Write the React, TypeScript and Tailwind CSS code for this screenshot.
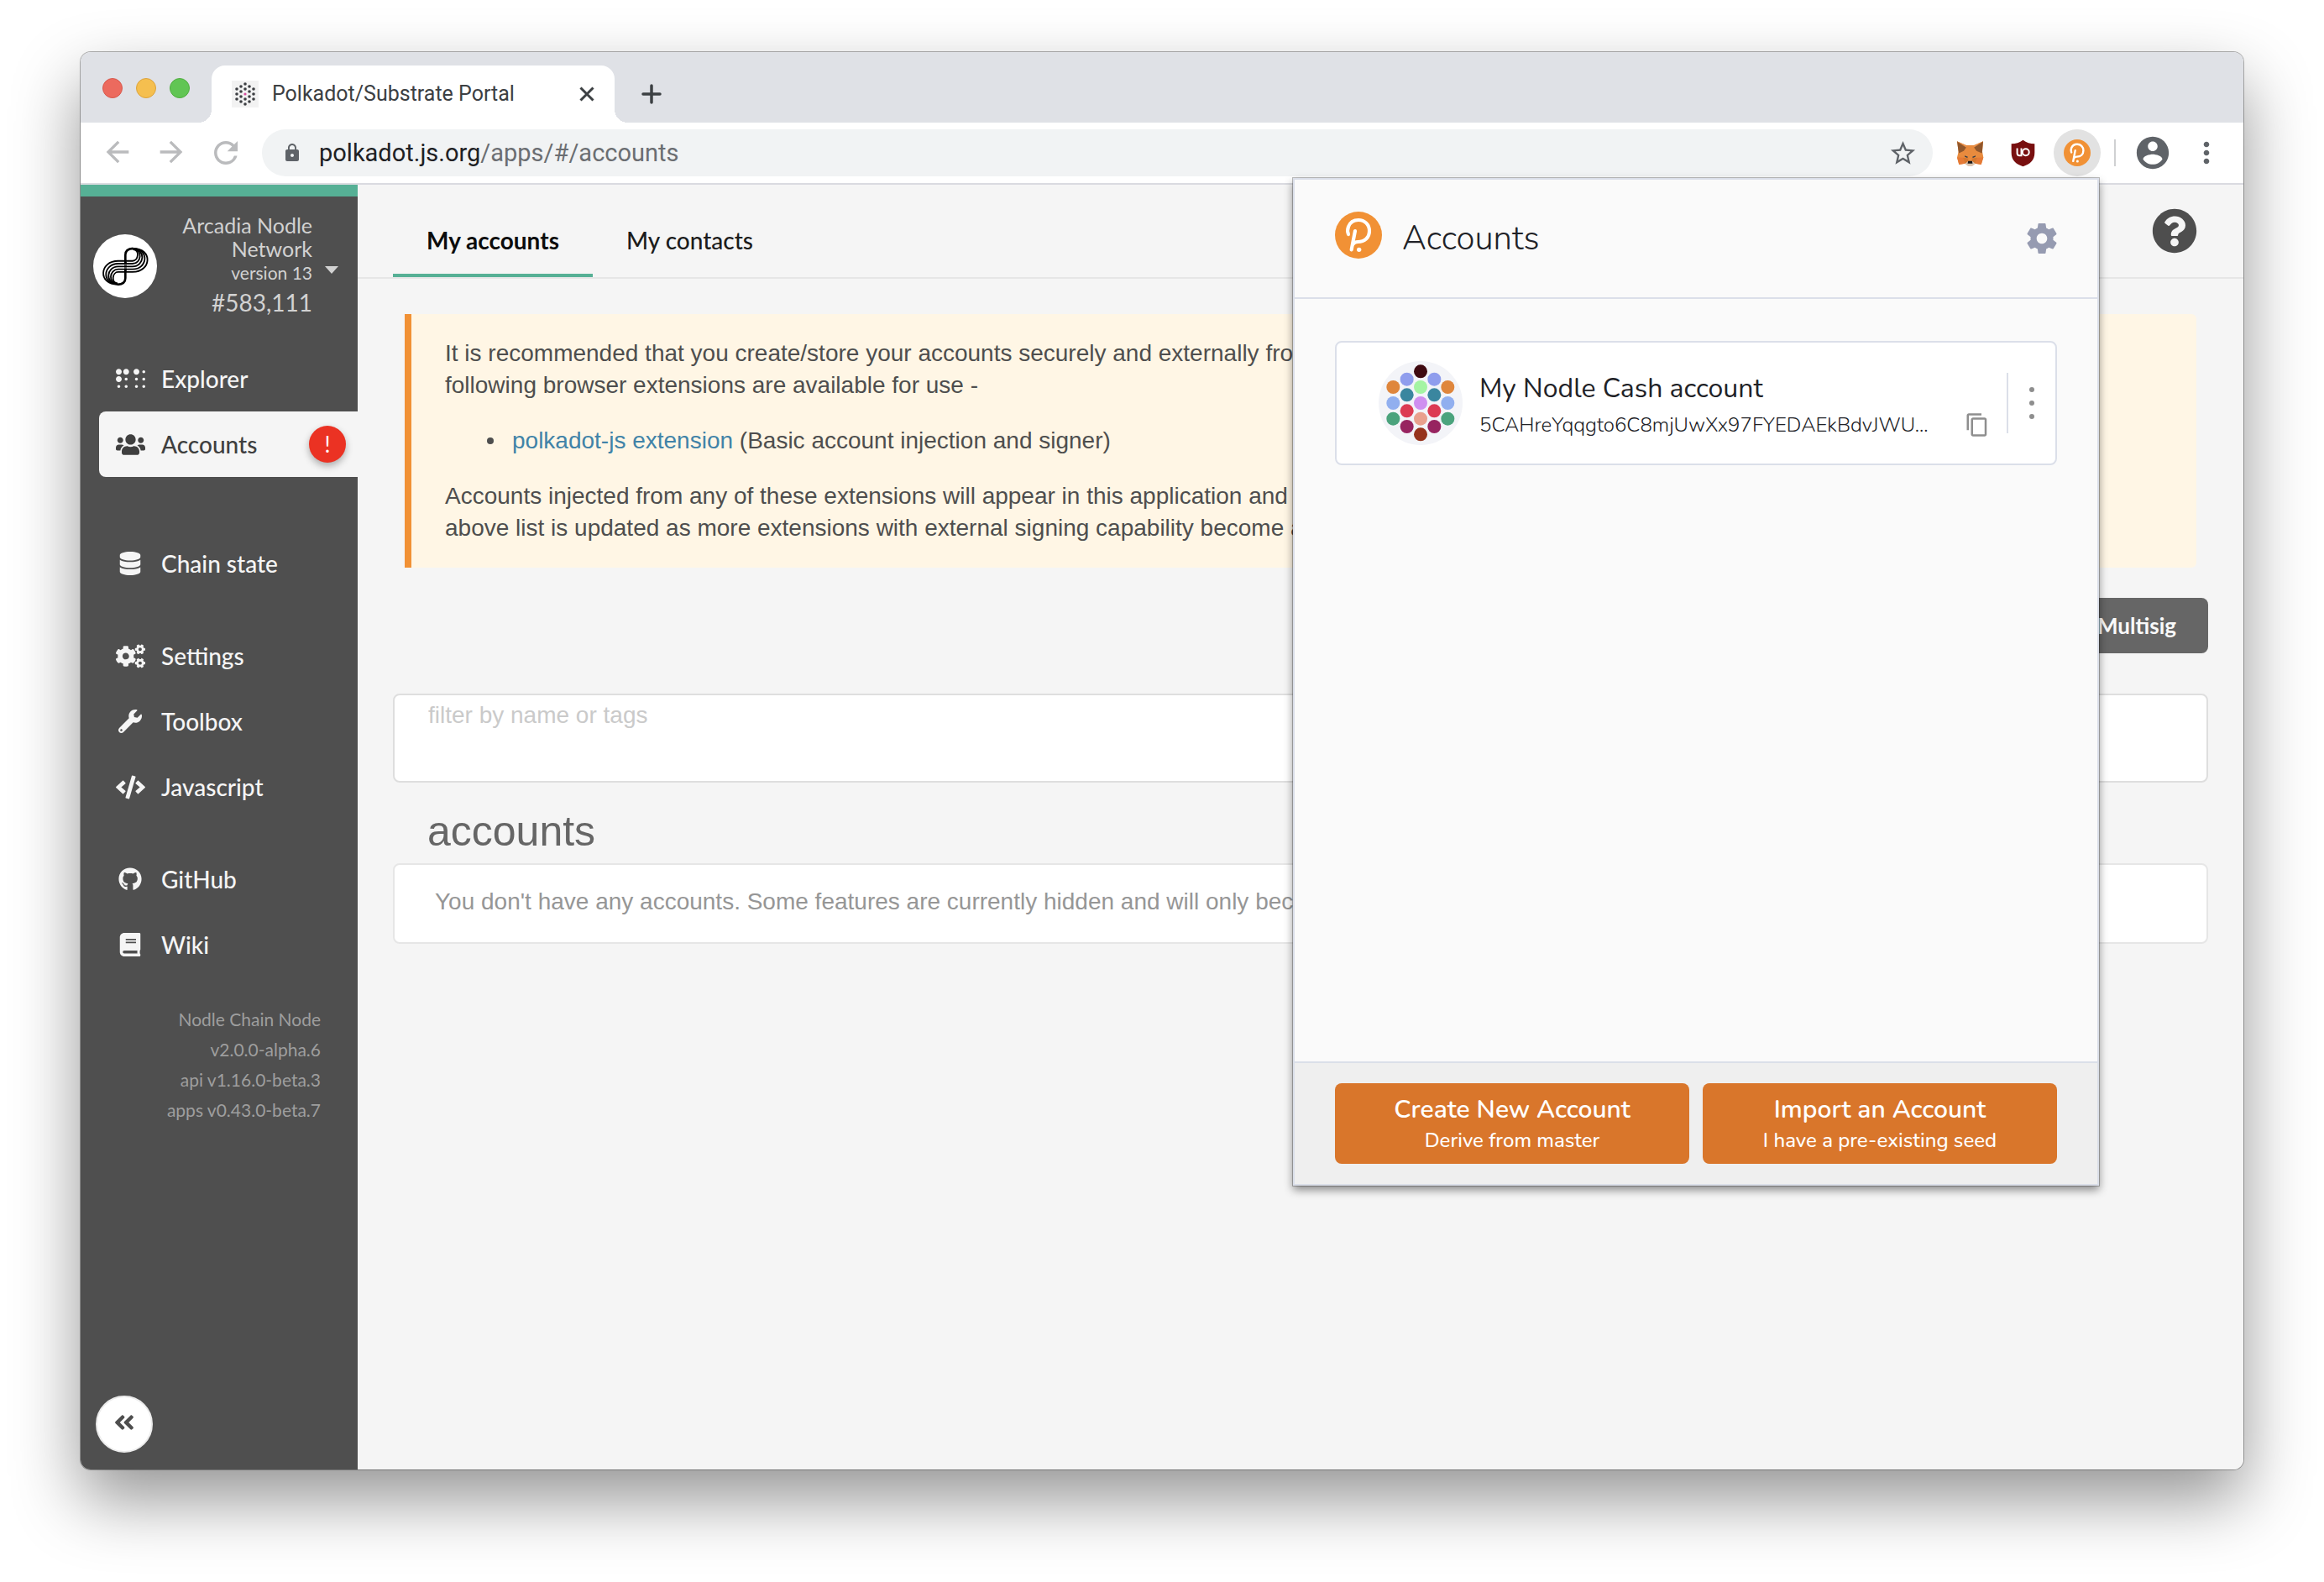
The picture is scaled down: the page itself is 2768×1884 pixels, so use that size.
import type { ReactNode } from "react";
import {
  FaAngleDoubleLeft,
  FaBook,
  FaBraille,
  FaCode,
  FaCogs,
  FaDatabase,
  FaGithub,
  FaQuestionCircle,
  FaUsers,
  FaWrench,
} from "react-icons/fa";
import {
  MdArrowBack,
  MdArrowForward,
  MdContentCopy,
  MdLock,
  MdMoreVert,
  MdRefresh,
  MdStarBorder,
} from "react-icons/md";

const lato = "font-['Lato',sans-serif]";
const helvetica = "font-['Liberation_Sans',Arial,sans-serif]";
const nunito = "font-['Nunito','Open_Sans',sans-serif]";

function PolkadotLogo({ className }: { className: string }) {
  return (
    <svg viewBox="90 66 168 168" className={className} aria-hidden="true">
      <circle cx="174" cy="150" r="84" fill="#f19135" />
      <g fill="none" stroke="#fff" strokeWidth="12.5" strokeLinecap="round" strokeLinejoin="round">
        <path d="M138 147C134 138 135 128 138 120C144 104 157 96 174 96C196 96 213 112 213 135C213 159 196 174 172 174C164 174 158 177 155 182" />
        <path d="M162 135L149 202" />
      </g>
      <circle cx="176" cy="202" r="8" fill="#fff" />
    </svg>
  );
}

function SubstrateFavicon() {
  const columns: [number, number[]][] = [
    [0, [-12, -6, 6, 12]],
    [5, [-9, -3, 3, 9]],
    [-5, [-9, -3, 3, 9]],
    [10, [-6, 0, 6]],
    [-10, [-6, 0, 6]],
  ];
  return (
    <svg viewBox="-16 -16 32 32" className="size-8 shrink-0" aria-hidden="true">
      <rect x="-16" y="-16" width="32" height="32" fill="#f2f2f2" />
      {columns.map(([x, ys]) =>
        ys.map((y) => <circle key={`${x} ${y}`} cx={x} cy={y} r="1.8" fill="#3c3e42" />),
      )}
      <circle r="1.6" fill="#d64a9c" />
    </svg>
  );
}

function FoxIcon() {
  return (
    <svg viewBox="388 108 100 94" className="h-[31px] w-[33px]" aria-hidden="true">
      <path
        d="M391 112L424 126H452L485 112L482 150L486 170L478 196L456 192L446 200H430L420 192L398 196L391 170L396 150Z"
        fill="#e88b3e"
      />
      <path d="M391 112L424 134L415 147L397 155Z M485 112L452 134L461 147L481 155Z" fill="#91572c" />
      <path d="M390 112L424 126V134Z M486 112L452 126V134Z" fill="#e8904a" />
      <path d="M391 170L412 171L420 192L398 196Z M486 170L464 171L456 192L478 196Z" fill="#e57a36" />
      <path d="M412 171L432 173L430 186L420 192Z M464 171L444 173L446 186L456 192Z" fill="#d5772f" />
      <path d="M418 163L430 168L428 172L419 168Z M458 163L446 168L448 172L457 168Z" fill="#2d3a48" />
      <path d="M420 192L431 184H446L456 192L446 201H430Z" fill="#d8c3b0" />
      <path d="M431 183H445L447 192H429Z" fill="#161616" />
    </svg>
  );
}

function ShieldIcon() {
  return (
    <svg viewBox="586 106 88 100" className="h-[33px] w-[29px]" aria-hidden="true">
      <path
        d="M630 108C618 118 604 122 588 122V154C588 182 604 195 630 204C656 195 672 182 672 154V122C656 122 642 118 630 108Z"
        fill="#780f0f"
      />
      <path d="M609 138V156Q609 164 617 164H624V138" fill="none" stroke="#fff" strokeWidth="6" />
      <circle cx="640" cy="152" r="12" fill="none" stroke="#fff" strokeWidth="6" />
    </svg>
  );
}

function NodleLogo() {
  const strands = [
    [190, 279],
    [180, 266],
    [170, 254],
    [160, 243],
    [150, 232],
  ];
  const half = (
    <g>
      {strands.map(([y, x], i) => (
        <path key={y} d={`M178 ${y}H205C${x - 6} ${y} ${x} ${105 + i} 207 ${105 + i}`} />
      ))}
      <path d="M179 186V128C179 113 189 106 207 105" strokeWidth="8" />
    </g>
  );
  return (
    <svg viewBox="63 54 230 230" className="size-[76px] shrink-0" aria-hidden="true">
      <circle cx="178" cy="169" r="115" fill="#fff" />
      <g fill="none" stroke="#000" strokeWidth="5.5">
        {half}
        <g transform="rotate(180 179 170)">{half}</g>
      </g>
      <path d="M173 165H185M173 175H185" stroke="#fff" strokeWidth="2" />
    </svg>
  );
}

function Identicon() {
  const dots: [number, number, string][] = [
    [396, 637, "#3f0a10"],
    [347, 665, "#8f9ded"],
    [445, 665, "#8f9ded"],
    [298, 693, "#df863c"],
    [396, 693, "#a4f4a3"],
    [493, 693, "#df863c"],
    [347, 721, "#3a869f"],
    [445, 721, "#3a869f"],
    [298, 750, "#91afef"],
    [396, 750, "#cf8ff0"],
    [493, 750, "#91afef"],
    [347, 778, "#dc3a52"],
    [445, 778, "#dc3a52"],
    [298, 806, "#4ba37d"],
    [396, 806, "#e9a08d"],
    [493, 806, "#4ba37d"],
    [347, 834, "#972460"],
    [445, 834, "#972460"],
    [396, 862, "#96331d"],
  ];
  return (
    <svg viewBox="246 600 300 300" className="size-[100px] shrink-0" aria-hidden="true">
      <circle cx="396" cy="750" r="150" fill="#f3f4f8" />
      {dots.map(([x, y, fill]) => (
        <circle key={`${x} ${y}`} cx={x} cy={y} r="24" fill={fill} />
      ))}
    </svg>
  );
}

function BrowserTabs() {
  return (
    <div className="flex h-[84px] items-end bg-[#dfe1e6] pl-[26px]">
      <div className="flex items-center gap-4 self-center pt-0.5 pr-[10px]">
        <button aria-label="Close window" className="size-6 rounded-full border border-[#d8584c] bg-[#ec6a5e]" />
        <button aria-label="Minimise window" className="size-6 rounded-full border border-[#dca33b] bg-[#f5bf4f]" />
        <button aria-label="Zoom window" className="size-6 rounded-full border border-[#4fae3e] bg-[#61c554]" />
      </div>
      <div className="size-4 bg-[radial-gradient(circle_at_0_0,transparent_16px,white_16px)]" />
      <div className="flex h-[68px] w-[480px] items-center rounded-t-2xl bg-white pr-6 pl-6">
        <SubstrateFavicon />
        <span className="ml-4 flex-1 text-[25px] leading-8 text-[#3c4043]">Polkadot/Substrate Portal</span>
        <button aria-label="Close tab" className="flex">
          <svg viewBox="0 0 18 18" className="size-[18px]" stroke="#3c4043" strokeWidth="3">
            <path d="M1.500 1.500L16.500 16.500M16.500 1.500L1.500 16.500" />
          </svg>
        </button>
      </div>
      <div className="size-4 bg-[radial-gradient(circle_at_100%_0,transparent_16px,white_16px)]" />
      <button aria-label="New tab" className="mb-[22px] ml-4 flex">
        <svg viewBox="0 0 24 24" className="size-6" stroke="#3c4043" strokeWidth="3.500" strokeLinecap="round">
          <path d="M12 2V22M2 12H22" />
        </svg>
      </button>
    </div>
  );
}

function Toolbar() {
  return (
    <div className="flex h-[74px] items-center border-b-2 border-[#dadbe0] bg-white pr-6 pl-6">
      <div className="flex shrink-0 gap-6 text-[#babbbd]">
        <button aria-label="Back" className="flex">
          <MdArrowBack size={40} />
        </button>
        <button aria-label="Forward" className="flex">
          <MdArrowForward size={40} />
        </button>
        <button aria-label="Reload" className="flex">
          <MdRefresh size={42} />
        </button>
      </div>
      <div className="ml-[22px] flex h-14 flex-1 items-center rounded-full bg-[#f1f3f4] pr-[18px] pl-6">
        <MdLock size={24} className="text-[#5f6368]" />
        <a href="#accounts" className="ml-5 flex-1 text-[29px] leading-9 text-[#6b6e72]">
          <span className="text-[#202124]">polkadot.js.org</span>/apps/#/accounts
        </a>
        <button aria-label="Bookmark this page" className="flex text-[#5f6368]">
          <MdStarBorder size={35} />
        </button>
      </div>
      <div className="flex shrink-0 items-center">
        <button aria-label="MetaMask" className="ml-7 flex">
          <FoxIcon />
        </button>
        <button aria-label="uBlock Origin" className="ml-8 flex">
          <ShieldIcon />
        </button>
        <button aria-label="polkadot-js" className="ml-[22px] flex size-14 items-center justify-center rounded-full bg-[#e2e2e2]">
          <PolkadotLogo className="size-8" />
        </button>
        <span className="ml-4 h-8 w-0.5 bg-[#cfd0d2]" />
        <button aria-label="Profile" className="ml-[21px] flex text-[#5f6368]">
          <svg viewBox="0 0 24 24" className="size-[46px]" fill="currentColor">
            <path d="M12 2C6.480 2 2 6.480 2 12s4.480 10 10 10 10-4.480 10-10S17.520 2 12 2zm0 3c1.660 0 3 1.340 3 3s-1.340 3-3 3-3-1.340-3-3 1.340-3 3-3zm0 14.200c-2.500 0-4.710-1.280-6-3.220.03-1.990 4-3.080 6-3.080 1.990 0 5.970 1.090 6 3.080-1.290 1.940-3.500 3.220-6 3.220z" />
          </svg>
        </button>
        <button aria-label="Menu" className="ml-[21px] flex text-[#5f6368]">
          <MdMoreVert size={40} />
        </button>
      </div>
    </div>
  );
}

function NavItem({ icon, label, active }: { icon: ReactNode; label: string; active?: boolean }) {
  return (
    <a
      href={`#${label.toLowerCase().replace(" ", "-")}`}
      className={
        active
          ? "flex h-[78px] items-center rounded-l-lg bg-[#f5f5f5] pr-[14px] pl-5 text-[#3f3f3f]"
          : "flex h-[78px] items-center pr-[14px] pl-5 text-[#f5f5f5]"
      }
    >
      <span className="flex w-[34px] shrink-0 justify-center [&>svg]:shrink-0">{icon}</span>
      <span className="ml-5 flex-1 text-[28px] font-medium">{label}</span>
      {active && (
        <span className="flex size-11 items-center justify-center rounded-full bg-[#eb3223] text-[26px] leading-none text-white shadow-[0_4px_8px_rgba(0,0,0,0.3)]">
          !
        </span>
      )}
    </a>
  );
}

function Sidebar() {
  return (
    <aside className={`flex w-[330px] shrink-0 flex-col border-t-14 border-[#56b095] bg-[#4f4f4f] ${lato}`}>
      <button className="flex items-center pt-5 pr-[23px] pl-[15px] text-right text-[#d2d2d2]">
        <NodleLogo />
        <span className="flex flex-1 flex-col">
          <span className="text-[25px] leading-7">
            Arcadia Nodle
            <br />
            Network
          </span>
          <span className="text-[21px] leading-[30px]">version 13</span>
          <span className="text-[28px] leading-10">#583,111</span>
        </span>
        <svg viewBox="0 0 16 9" className="mt-2 ml-[15px] h-[9px] w-4" fill="currentColor" aria-hidden="true">
          <path d="M0 0H16L8 9Z" />
        </svg>
      </button>
      <nav className="mt-8 flex flex-col gap-8 pl-[22px]">
        <div className="mb-8">
          <NavItem icon={<FaBraille size={35} />} label="Explorer" />
          <NavItem icon={<FaUsers size={35} />} label="Accounts" active />
        </div>
        <NavItem icon={<FaDatabase size={28} />} label="Chain state" />
        <div>
          <NavItem icon={<FaCogs size={35} />} label="Settings" />
          <NavItem icon={<FaWrench size={28} />} label="Toolbox" />
          <NavItem icon={<FaCode size={35} />} label="Javascript" />
        </div>
        <div>
          <NavItem icon={<FaGithub size={28} />} label="GitHub" />
          <NavItem icon={<FaBook size={28} />} label="Wiki" />
        </div>
      </nav>
      <div className="mt-8 pr-11 text-right text-[21px] leading-9 text-[#9e9e9e]">
        <p>Nodle Chain Node</p>
        <p>v2.0.0-alpha.6</p>
        <p>api v1.16.0-beta.3</p>
        <p>apps v0.43.0-beta.7</p>
      </div>
      <button
        aria-label="Collapse sidebar"
        className="mt-auto mb-5 ml-[18px] flex size-[68px] items-center justify-center rounded-full border-2 border-[#ebebeb] bg-white pb-1 text-[28px] text-[#4e4e4e]"
      >
        <FaAngleDoubleLeft />
      </button>
    </aside>
  );
}

function AccountsPage() {
  return (
    <main className={`min-w-0 flex-1 bg-[#f5f5f5] text-[28px] ${helvetica}`}>
      <div className={`flex h-28 items-center border-b-2 border-[#e6e6e6] pr-[55px] pl-[42px] ${lato}`}>
        <button className="h-[84px] self-end border-b-4 border-[#56b095] px-10 font-bold text-[#0c0c0c]">
          My accounts
        </button>
        <button className="h-[84px] self-end border-b-4 border-transparent px-10 font-medium text-[#1c1c1c]">
          My contacts
        </button>
        <button aria-label="Help" className="ml-auto flex text-[54px] text-[#4e4e4e]">
          <FaQuestionCircle />
        </button>
      </div>
      <div className="flex flex-col px-[42px]">
        <article className="mx-[14px] mt-[42px] rounded-r-md border-l-8 border-[#f19135] bg-[#fff6e5] px-10 py-7 leading-[38px] text-[#4e4e4e]">
          <p>
            It is recommended that you create/store your accounts securely and externally from the app. On Chrome the
            <br />
            following browser extensions are available for use -
          </p>
          <ul className="my-7 pl-[50px]">
            <li className="flex items-center before:mr-[22px] before:size-2 before:rounded-full before:bg-[#4e4e4e] before:content-['']">
              <span>
                <a href="#extension" className="text-[#4183a8]">
                  polkadot-js extension
                </a>{" "}
                (Basic account injection and signer)
              </span>
            </li>
          </ul>
          <p>
            Accounts injected from any of these extensions will appear in this application and be available for use. The
            <br />
            above list is updated as more extensions with external signing capability become available.
          </p>
        </article>
        <button
          className={`mt-9 h-[66px] self-end rounded-lg bg-[#666] pr-[38px] pl-16 text-[26px] font-bold text-[#f9f9f9] ${lato}`}
        >
          Multisig
        </button>
        <div className="mt-12 h-[106px] rounded-lg border-2 border-[#dedede] bg-white px-10 pt-2">
          <input
            type="text"
            aria-label="filter by name or tags"
            placeholder="filter by name or tags"
            className="block h-8 w-full bg-transparent outline-none placeholder:text-[#cacaca]"
          />
        </div>
        <h1 className="mt-7 mb-2 pl-[41px] text-[50px] leading-[60px] text-[#666]">accounts</h1>
        <div className="rounded-lg border-2 border-[#e6e6e6] bg-white">
          <table className="w-full" aria-label="accounts">
            <tbody>
              <tr>
                <td className="h-[92px] px-12 pb-1 text-[#969696]">
                  You don't have any accounts. Some features are currently hidden and will only become available once
                  you have accounts.
                </td>
              </tr>
            </tbody>
          </table>
        </div>
      </div>
    </main>
  );
}

function ExtensionPopup() {
  return (
    <section
      aria-label="Extension"
      className={`absolute top-[150px] right-[172px] flex min-h-[1200px] w-[960px] flex-col border-2 border-[#dbdfe9] bg-[#fafafa] text-[#212227] shadow-[0_0_0_1px_rgba(0,0,0,0.25),0_5px_10px_rgba(0,0,0,0.45)] ${nunito}`}
    >
      <header className="flex h-[142px] items-center border-b-2 border-[#dbdfe9] px-12">
        <PolkadotLogo className="mb-2 size-14" />
        <h2 className="ml-6 flex-1 text-[40px] leading-[56px] font-light">Accounts</h2>
        <button aria-label="Settings" className="flex text-[#969bb1]">
          <svg viewBox="2 2 20 20" className="size-9" fill="currentColor">
            <path d="M19.430 12.980c.04-.32.07-.64.07-.98s-.03-.66-.07-.98l2.110-1.650c.19-.15.24-.42.12-.64l-2-3.460c-.12-.22-.39-.3-.61-.22l-2.490 1c-.52-.4-1.080-.73-1.690-.98l-.38-2.650C14.460 2.180 14.250 2 14 2h-4c-.25 0-.46.18-.49.42l-.38 2.650c-.61.25-1.170.59-1.690.98l-2.490-1c-.23-.09-.49 0-.61.22l-2 3.460c-.13.22-.07.49.12.64l2.110 1.650c-.04.32-.07.65-.07.98s.03.66.07.98l-2.110 1.650c-.19.15-.24.42-.12.64l2 3.460c.12.22.39.3.61.22l2.490-1c.52.4 1.080.73 1.690.98l.38 2.650c.03.24.24.42.49.42h4c.25 0 .46-.18.49-.42l.38-2.650c.61-.25 1.170-.59 1.690-.98l2.490 1c.23.09.49 0 .61-.22l2-3.460c.12-.22.07-.49-.12-.64l-2.110-1.650zM12 15.500c-1.930 0-3.500-1.570-3.500-3.500s1.570-3.500 3.500-3.500 3.500 1.570 3.500 3.500-1.570 3.500-3.500 3.500z" />
          </svg>
        </button>
      </header>
      <div className="flex-1 px-12 pt-[50px]">
        <div className="flex h-[148px] items-center rounded-lg border-2 border-[#dbdfe9] bg-white pl-[50px]">
          <Identicon />
          <div className="ml-5 min-w-0 flex-1 pt-2 whitespace-nowrap">
            <p className="text-[32px] leading-[44px]">My Nodle Cash account</p>
            <div className="flex h-[42px] items-center justify-between pr-5">
              <span className="text-[24px] font-light">5CAHreYqqgto6C8mjUwXx97FYEDAEkBdvJWU...</span>
              <button aria-label="Copy address" className="flex text-[#8e8e8e]">
                <MdContentCopy size={30} />
              </button>
            </div>
          </div>
          <button
            aria-label="Account menu"
            className="flex h-[72px] w-[58px] items-center justify-center border-l-2 border-[#dbdfe9]"
          >
            <svg viewBox="0 0 6 38" className="h-[38px] w-[6px]" fill="#8e8e8e">
              <circle cx="3" cy="3" r="3" />
              <circle cx="3" cy="19" r="3" />
              <circle cx="3" cy="35" r="3" />
            </svg>
          </button>
        </div>
      </div>
      <footer className="grid grid-cols-2 gap-4 border-t-2 border-[#dbdfe9] bg-[#efefef] px-12 py-6 text-white">
        <button className="flex h-24 flex-col items-center justify-center rounded-lg bg-[#d9762b]">
          <span className="text-[30px] leading-10 font-semibold">Create New Account</span>
          <span className="text-[24px] leading-8 font-medium">Derive from master</span>
        </button>
        <button className="flex h-24 flex-col items-center justify-center rounded-lg bg-[#d9762b]">
          <span className="text-[30px] leading-10 font-semibold">Import an Account</span>
          <span className="text-[24px] leading-8 font-medium">I have a pre-existing seed</span>
        </button>
      </footer>
    </section>
  );
}

export default function App() {
  return (
    <div className="flex min-h-screen bg-white px-24 pt-[62px] pb-[134px] font-['Roboto',sans-serif]">
      <div className="relative flex min-w-0 flex-1 flex-col rounded-xl shadow-[0_0_0_1px_rgba(0,0,0,0.3),0_36px_80px_rgba(0,0,0,0.42)]">
        <div className="flex flex-1 flex-col overflow-hidden rounded-xl">
          <BrowserTabs />
          <Toolbar />
          <div className="flex flex-1">
            <Sidebar />
            <AccountsPage />
          </div>
        </div>
        <ExtensionPopup />
      </div>
    </div>
  );
}
